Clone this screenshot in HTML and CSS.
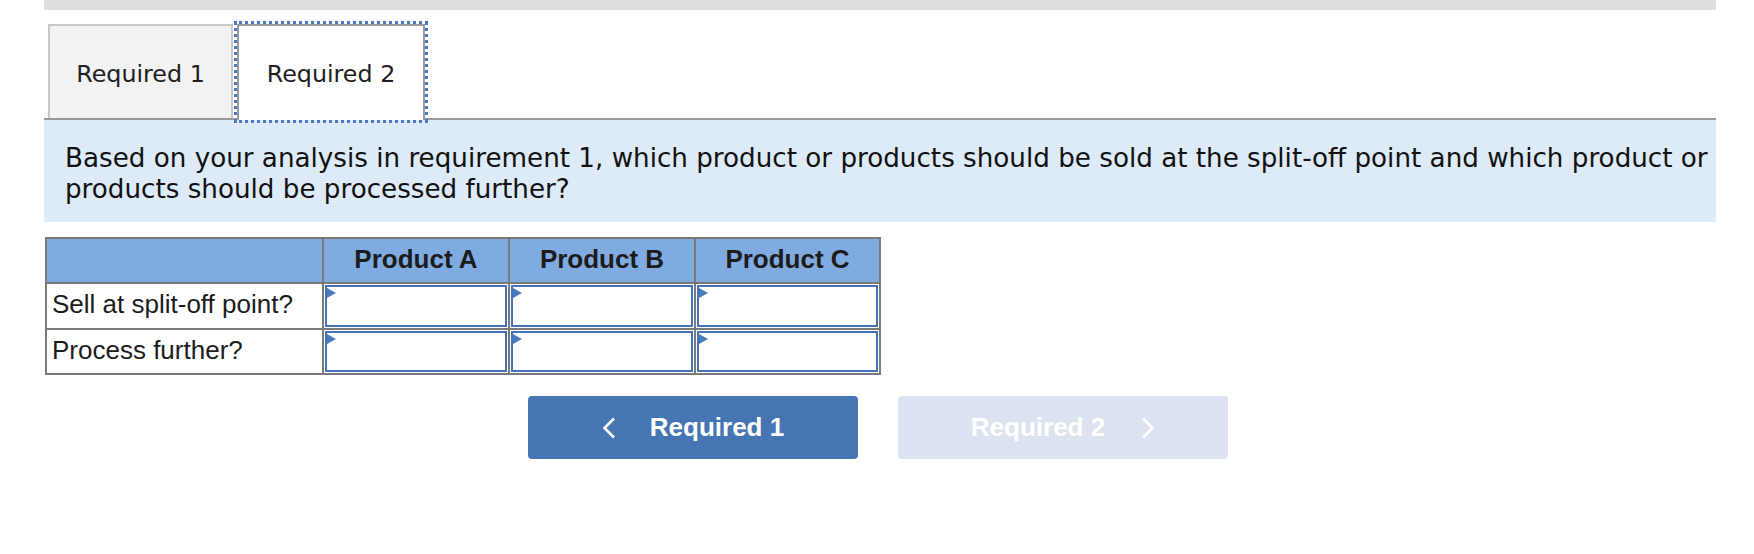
FILE: index.html
```html
<!DOCTYPE html>
<html>
<head>
<meta charset="utf-8">
<link rel="stylesheet" href="styles.css">
</head>
<body>
<div class="wrap">
  <div class="topbar"></div>
  <div class="tabs">
    <div class="tab tab-off">Required 1</div>
    <div class="tab tab-on">Required 2</div>
  </div>
  <div class="panel">
    <p class="question">Based on your analysis in requirement 1, which product or products should be sold at the split-off point and which product or products should be processed further?</p>
  </div>
  <div class="grid">
    <div class="hcell"></div>
    <div class="hcell">Product A</div>
    <div class="hcell">Product B</div>
    <div class="hcell">Product C</div>

    <div class="label r1">Sell at split-off point?</div>
    <div class="icell r1"><div class="ibox"><span class="flag"></span></div></div>
    <div class="icell r1"><div class="ibox"><span class="flag"></span></div></div>
    <div class="icell r1"><div class="ibox"><span class="flag"></span></div></div>

    <div class="label r2">Process further?</div>
    <div class="icell r2"><div class="ibox"><span class="flag"></span></div></div>
    <div class="icell r2"><div class="ibox"><span class="flag"></span></div></div>
    <div class="icell r2"><div class="ibox"><span class="flag"></span></div></div>
  </div>
  <div class="navs">
    <div class="btn btn-prev">
      <svg class="chev" width="14" height="22" viewBox="0 0 14 22"><polyline points="12,1.5 2.5,11 12,20.5" fill="none" stroke="#fff" stroke-width="2.6"/></svg>
      <span>Required 1</span>
    </div>
    <div class="btn btn-next">
      <span>Required 2</span>
      <svg class="chev" width="14" height="22" viewBox="0 0 14 22"><polyline points="2,1.5 11.5,11 2,20.5" fill="none" stroke="#fff" stroke-width="2.6"/></svg>
    </div>
  </div>
</div>
</body>
</html>
```
FILE: styles.css
```css
html, body {
  margin: 0;
  padding: 0;
  background: #fff;
}
.wrap {
  margin-left: 44px;
  width: 1672px;
}
.topbar {
  height: 10px;
  background: #dedede;
}
.tabs {
  display: flex;
  align-items: flex-end;
  padding-top: 14px;
  padding-left: 4px;
  border-bottom: 2px solid #999;
}
.tab {
  box-sizing: border-box;
  height: 94px;
  display: flex;
  align-items: center;
  justify-content: center;
  padding-top: 4px;
  font-family: "DejaVu Sans", Verdana, sans-serif;
  font-size: 23.8px;
  color: #1e1e1e;
}
.tab-off {
  width: 185px;
  background: #f2f2f2;
  border: 2px solid #c9c9c9;
  border-bottom: none;
}
.tab-on {
  width: 188px;
  height: 96px;
  margin-left: 4px;
  margin-bottom: -2px;
  background: #fff;
  border: 2px solid #9a9a9a;
  border-bottom: none;
  outline: 3px dotted #4b78c2;
  outline-offset: 0px;
  padding-top: 4px;
  padding-bottom: 2px;
}
.panel {
  background: #ddeaf7;
  padding: 23px 0 17px 21px;
}
.question {
  margin: 0;
  font-family: "DejaVu Sans", Verdana, sans-serif;
  font-size: 26.2px;
  line-height: 31px;
  color: #111;
}
.grid {
  margin-top: 15px;
  margin-left: 1px;
  display: grid;
  grid-template-columns: 275px 184px 184px 183px;
  grid-template-rows: 43px 44px 43px;
  gap: 2px;
  padding: 2px;
  width: max-content;
  background: #7a7a7a;
  font-family: "Liberation Sans", Arial, sans-serif;
  font-size: 26px;
  color: #1c1c1c;
}
.hcell {
  background: #80abe0;
  font-weight: bold;
  display: flex;
  align-items: center;
  justify-content: center;
  padding-bottom: 2px;
}
.label {
  background: #fff;
  display: flex;
  align-items: center;
  padding-left: 5px;
  padding-bottom: 3px;
}
.icell {
  background: #fff;
  padding: 1px;
  display: flex;
}
.ibox {
  position: relative;
  flex: 1;
  border: 2px solid #4573b5;
}
.flag {
  position: absolute;
  left: 0;
  top: 1px;
  width: 0;
  height: 0;
  border-left: 9px solid #4a79c0;
  border-top: 5px solid transparent;
  border-bottom: 5px solid transparent;
}
.navs {
  display: flex;
  justify-content: center;
  gap: 40px;
  margin-top: 21px;
  padding-right: 4px;
}
.btn {
  width: 330px;
  height: 63px;
  border-radius: 4px;
  display: flex;
  align-items: center;
  justify-content: center;
  gap: 34px;
  font-family: "Liberation Sans", Arial, sans-serif;
  font-weight: bold;
  font-size: 26px;
  color: #fff;
}
.btn-prev {
  background: #4675b3;
}
.btn-next {
  background: #dae3ef;
  gap: 36px;
}
.chev {
  display: block;
}
```
